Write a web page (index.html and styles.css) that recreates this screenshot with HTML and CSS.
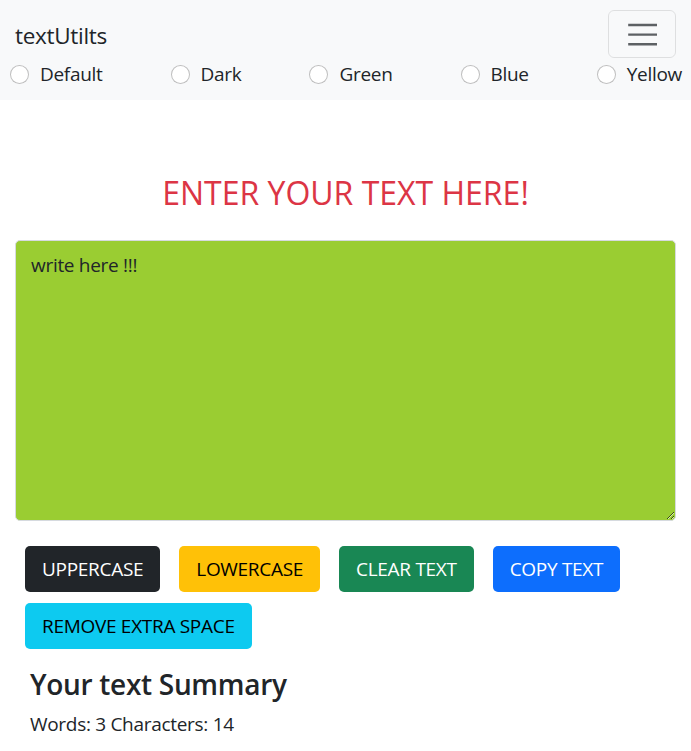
FILE: index.html
```html
<!DOCTYPE html>
<html lang="en">
<head>
<meta charset="utf-8">
<title>textUtilts</title>
<link rel="stylesheet" href="styles.css">
</head>
<body>
<nav class="navbar">
  <div class="nav-top">
    <a class="brand" href="#">textUtilts</a>
    <button class="toggler" type="button" aria-label="Toggle navigation">
      <svg width="36" height="36" viewBox="0 0 30 30"><path d="M3.5 7.5h24M3.5 15.5h24M3.5 23.5h24" stroke="rgba(33,37,41,0.72)" stroke-width="2" fill="none"/></svg>
    </button>
  </div>
  <div class="themes">
    <label class="radio"><span class="dot"></span>Default</label>
    <label class="radio"><span class="dot"></span>Dark</label>
    <label class="radio"><span class="dot"></span>Green</label>
    <label class="radio"><span class="dot"></span>Blue</label>
    <label class="radio"><span class="dot"></span>Yellow</label>
  </div>
</nav>
<main class="container">
  <h1 class="title">ENTER YOUR TEXT HERE!</h1>
  <textarea class="editor" rows="8">write here !!!</textarea>
  <div class="actions">
    <button class="btn btn-dark" type="button">UPPERCASE</button>
    <button class="btn btn-warning" type="button">LOWERCASE</button>
    <button class="btn btn-success" type="button">CLEAR TEXT</button>
    <button class="btn btn-primary" type="button">COPY TEXT</button>
    <button class="btn btn-info" type="button">REMOVE EXTRA SPACE</button>
  </div>
  <section class="summary">
    <h2 class="summary-title">Your text Summary</h2>
    <p class="summary-text">Words: 3 Characters: 14</p>
  </section>
</main>
</body>
</html>
```
FILE: styles.css
```css
* { box-sizing: border-box; }
html, body { margin: 0; padding: 0; }
body {
  font-family: "Open Sans", "Noto Sans", sans-serif;
  font-size: 19px;
  letter-spacing: -0.3px;
  color: #212529;
  background: #fff;
}
.navbar {
  background: #f8f9fa;
  height: 100px;
  padding-top: 10px;
}
.nav-top {
  display: flex;
  justify-content: space-between;
  align-items: center;
  padding: 0 15px;
  height: 48px;
}
.brand {
  font-size: 22.5px;
  color: #212529;
  text-decoration: none;
  margin-top: 2px;
}
.toggler {
  width: 68px;
  height: 48px;
  border: 1px solid rgba(0,0,0,0.1);
  border-radius: 6px;
  background: transparent;
  display: flex;
  align-items: center;
  justify-content: center;
  padding: 0;
}
.themes {
  display: flex;
  justify-content: space-between;
  align-items: center;
  padding: 0 9px 0 10px;
  height: 30px;
  margin-top: 1px;
}
.radio {
  display: flex;
  align-items: center;
  gap: 11px;
  line-height: 30px;
}
.dot {
  width: 19px;
  height: 19px;
  border-radius: 50%;
  border: 1px solid rgba(0,0,0,0.25);
  background: #fff;
  flex: none;
}
.container {
  padding: 0 15px;
}
.title {
  text-align: center;
  color: #dc3545;
  font-size: 32px;
  font-weight: 500;
  letter-spacing: 0;
  margin: 74px 0 28px;
  line-height: 1.2;
}
.editor {
  display: block;
  width: 100%;
  height: 281px;
  background: #9acd32;
  border: 1px solid #d6dadf;
  border-radius: 5px;
  padding: 10px 15px;
  font-family: inherit;
  font-size: 19px;
  letter-spacing: -0.3px;
  color: #212529;
  line-height: 1.5;
}
.actions {
  display: flex;
  flex-wrap: wrap;
  gap: 11px 19px;
  padding-left: 10px;
  margin-top: 25px;
}
.btn {
  font-family: inherit;
  font-size: 19px;
  letter-spacing: -0.3px;
  height: 46px;
  padding: 0 16px;
  border: 1px solid transparent;
  border-radius: 5px;
  line-height: 1;
}
.btn-dark { background: #212529; color: #fff; }
.btn-warning { background: #ffc107; color: #000; }
.btn-success { background: #198754; color: #fff; }
.btn-primary { background: #0d6efd; color: #fff; }
.btn-info { background: #0dcaf0; color: #000; }
.summary {
  padding-left: 15px;
  margin-top: 19px;
}
.summary-title {
  font-size: 28px;
  font-weight: 600;
  margin: 0 0 8px;
  line-height: 1.2;
}
.summary-text {
  margin: 0;
  line-height: 1.5;
}
```
